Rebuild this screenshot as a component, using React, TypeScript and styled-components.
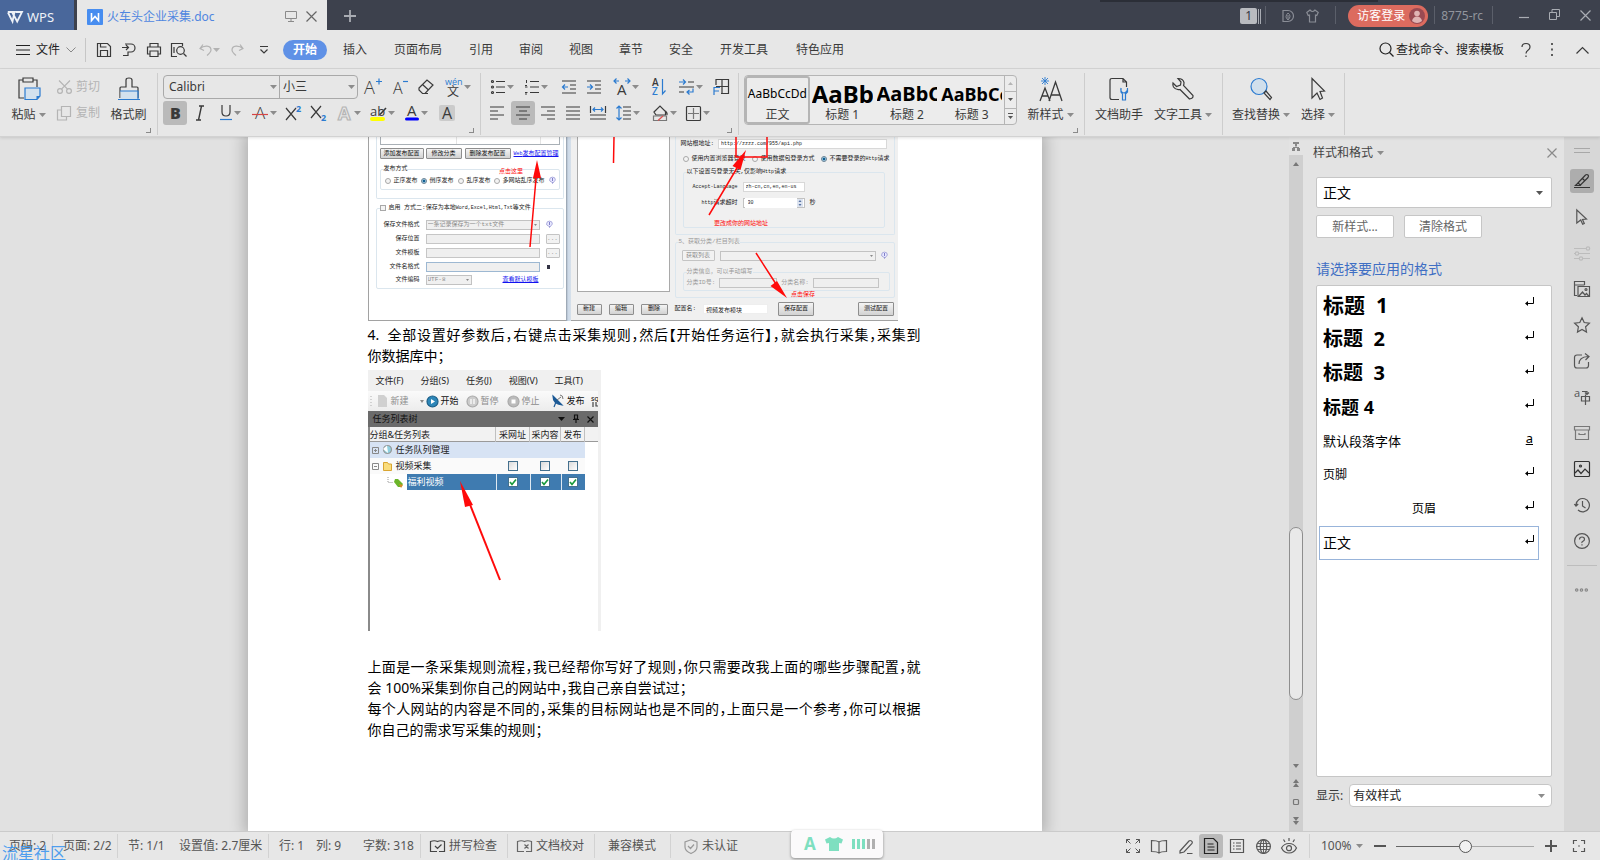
import React from "react";
import styled, { createGlobalStyle, css } from "styled-components";

const UI = `"Noto Sans", "Noto Sans CJK SC", sans-serif`;
const SONG = `"Noto Sans", "Noto Sans CJK SC", sans-serif`;
const PIX = `"Liberation Mono", "Noto Sans CJK SC", monospace`;
const INK = "#3a3a3a";
const BLUE = "#2b7bd0";
const GREY = "#b4b4b4";
const RED = "#ff0a0a";

const Global = createGlobalStyle`
  *, *::before, *::after { box-sizing: border-box; }
  body { margin: 0; font-family: ${UI}; font-size: 12px; line-height: 16px; color: ${INK}; }
  button, input, select { font: inherit; color: inherit; margin: 0; padding: 0; border: 0; background: none; border-radius: 0; }
  button { cursor: default; }
  select { appearance: none; }
  fieldset { min-width: 0; margin: 0; padding: 0; border: 0; }
  legend { padding: 0; }
  p { margin: 0; }
`;

/* ---------- drawing helpers ---------- */

const Drawing = styled.svg`
  display: block;
  flex: none;
  fill: none;
  stroke: currentColor;
  stroke-width: 1.2;
  overflow: visible;
  text {
    stroke: none;
    fill: currentColor;
    font-family: "Open Sans", "Noto Sans CJK SC", sans-serif;
  }
`;

type DrawProps = { w?: number; h?: number; c?: string; children: React.ReactNode };
const Draw = ({ w = 18, h = 18, c, children }: DrawProps) => (
  <Drawing width={w} height={h} viewBox={`0 0 ${w} ${h}`} color={c} aria-hidden="true">
    {children}
  </Drawing>
);
const Caret = ({ c = "#8c8c8c" }: { c?: string }) => (
  <Draw w={7} h={4} c={c}>
    <path d="M0 0h7l-3.500 4z" fill="currentColor" stroke="none" />
  </Draw>
);
const Cross = ({ c, s = 11 }: { c?: string; s?: number }) => (
  <Draw w={s} h={s} c={c}>
    <path d={`M.5.5 ${s - 0.5} ${s - 0.5}M${s - 0.5}.5.5 ${s - 0.5}`} />
  </Draw>
);

/* ---------- frame ---------- */

const Shell = styled.div`
  display: flex;
  flex-direction: column;
  height: 100vh;
  overflow: hidden;
  background: #e7e7e7;
`;

const TitleBar = styled.header`
  display: flex;
  align-items: stretch;
  height: 30px;
  flex: none;
  background: linear-gradient(#2b2e37, #2b2e37) right 222px top / 278px 2px no-repeat #3d414d;
  color: #a9acb3;
`;
const WpsButton = styled.button`
  display: flex;
  align-items: center;
  gap: 4px;
  width: 74px;
  margin-right: 3px;
  padding-left: 7px;
  padding-top: 3px;
  background: #49679b;
  color: #eef2f8;
  font-size: 13px;
`;
const FileTab = styled.div`
  display: flex;
  align-items: center;
  width: 250px;
  padding: 3px 10px 0;
  background: #e7e7e7;
  color: #8a8a8a;
`;
const FileName = styled.span`
  flex: 1;
  padding-left: 4px;
  color: #4f86e0;
`;
const TabIcons = styled.span`
  display: flex;
  align-items: center;
  gap: 9px;
`;
const PlainButton = styled.button<{ $w?: number }>`
  display: flex;
  align-items: center;
  justify-content: center;
  width: ${(p) => p.$w ?? 24}px;
  flex: none;
`;
const Grow = styled.div<{ $n?: number }>`
  flex: ${(p) => p.$n ?? 1};
`;
const BarRule = styled.i<{ $l: number; $r: number }>`
  width: 1px;
  margin: 6px ${(p) => p.$r}px 6px ${(p) => p.$l}px;
  background: #5b5f6a;
`;
const GuestButton = styled.button`
  display: flex;
  align-items: center;
  gap: 4px;
  height: 22px;
  align-self: center;
  width: 80px;
  padding-left: 9px;
  border-radius: 11px;
  background: #dc6b5f;
  color: #fff;
  margin-top: 2px;
`;
const Version = styled.span`
  align-self: center;
  color: #92959d;
  padding-top: 2px;
`;
const WindowCount = styled.span`
  align-self: center;
  width: 17px;
  height: 16px;
  background: #b9bbc0;
  color: #33363f;
  text-align: center;
  border-radius: 2px;
  margin-top: 2px;
`;

const MenuBar = styled.nav`
  display: flex;
  align-items: center;
  height: 39px;
  flex: none;
  padding-top: 1px;
  border-bottom: 1px solid #d6d6d6;
`;
const FileMenu = styled.button`
  display: flex;
  align-items: center;
  gap: 6px;
  width: 86px;
  height: 24px;
  padding-left: 16px;
  border-right: 1px solid #c6c6c6;
  color: #222;
`;
const QuickBar = styled.div`
  display: flex;
  align-items: center;
  width: 197px;
  padding-left: 5px;
`;
const MenuTab = styled.button<{ $long?: boolean }>`
  width: ${(p) => (p.$long ? 76 : 50)}px;
  height: 24px;
`;
const ActiveTab = styled.button`
  width: 44px;
  height: 20px;
  margin-right: 3px;
  border-radius: 10px;
  background: #5f91e6;
  color: #fff;
  font-weight: 700;
`;
const SearchBox = styled.button`
  display: flex;
  align-items: center;
  gap: 2px;
  color: #222;
  margin-right: 8px;
`;

/* ---------- ribbon ---------- */

const Ribbon = styled.div`
  display: flex;
  height: 68px;
  flex: none;
  padding: 4px 0 0;
  border-bottom: 1px solid #d2d2d2;
  position: relative;
  z-index: 2;
  box-shadow: 0 1px 3px rgba(0, 0, 0, 0.12);
  background: #e7e7e7;
`;
const Group = styled.section<{ $w: number; $corner?: boolean }>`
  position: relative;
  display: flex;
  width: ${(p) => p.$w}px;
  height: 62px;
  flex: none;
  border-right: 1px solid #cdcdcd;
  ${(p) =>
    p.$corner &&
    css`
      &::after {
        content: "";
        position: absolute;
        right: 6px;
        bottom: 2px;
        width: 5px;
        height: 5px;
        border: solid #8a8a8a;
        border-width: 0 1px 1px 0;
      }
    `}
`;
const Rows = styled.div<{ $l?: number }>`
  display: flex;
  flex-direction: column;
  gap: 2px;
  padding: 2px 0 0 ${(p) => p.$l ?? 5}px;
`;
const Row = styled.div`
  display: flex;
  align-items: center;
  height: 24px;
`;
const Tool = styled.button<{ $w?: number; $on?: boolean; $ml?: number }>`
  display: flex;
  align-items: center;
  justify-content: center;
  width: ${(p) => p.$w ?? 25}px;
  height: 24px;
  flex: none;
  margin-left: ${(p) => p.$ml ?? 0}px;
  border-radius: 3px;
  background: ${(p) => (p.$on ? "#bababa" : "transparent")};
`;
const SplitTool = styled(Tool)`
  width: 34px;
  gap: 2px;
  padding-left: 2px;
`;
const Split = ({ children, ml }: { children: React.ReactNode; ml?: number }) => (
  <SplitTool $ml={ml}>
    {children}
    <Caret />
  </SplitTool>
);
const BigTool = styled.button<{ $w: number }>`
  display: flex;
  flex-direction: column;
  align-items: center;
  width: ${(p) => p.$w}px;
  flex: none;
  padding-top: 4px;
  gap: 6px;
  white-space: nowrap;
`;
const BigLabel = styled.span`
  display: flex;
  align-items: center;
  gap: 3px;
`;
const SmallTool = styled.button`
  display: flex;
  align-items: center;
  gap: 4px;
  height: 24px;
  color: ${GREY};
  white-space: nowrap;
`;
const FontBox = styled.div`
  display: flex;
  width: 195px;
  height: 24px;
  border: 1px solid #a9a9a9;
  border-radius: 4px;
`;
const FontPick = styled.label<{ $w: number }>`
  display: flex;
  align-items: center;
  width: ${(p) => p.$w}px;
  padding: 0 2px 0 5px;
  & + & {
    border-left: 1px solid #a9a9a9;
    padding-left: 3px;
  }
  select {
    flex: 1;
    min-width: 0;
    font-size: 12px;
  }
`;
const Gallery = styled.div`
  display: flex;
  width: 273px;
  height: 50px;
  margin: 2px 0 0 5px;
  border: 1px solid #b5b5b5;
  border-radius: 4px;
  background: #ececec;
  overflow: hidden;
`;
const StyleCard = styled.button<{ $on?: boolean }>`
  width: 65px;
  padding-top: 3px;
  border: 2px solid ${(p) => (p.$on ? "#b5b5b5" : "transparent")};
  border-radius: 3px;
  overflow: hidden;
`;
const Sample = styled.span<{ $size: number; $bold?: boolean }>`
  display: block;
  height: 26px;
  line-height: 26px;
  font-size: ${(p) => p.$size}px;
  font-weight: ${(p) => (p.$bold ? 700 : 400)};
  color: #000;
  white-space: nowrap;
  overflow: hidden;
`;
const GalleryNav = styled.div`
  display: flex;
  flex-direction: column;
  width: 12px;
  margin-left: auto;
  border-left: 1px solid #b5b5b5;
  button {
    flex: 1;
    display: flex;
    align-items: center;
    justify-content: center;
  }
  button + button {
    border-top: 1px solid #b5b5b5;
  }
`;

/* ---------- work area ---------- */

const Work = styled.main`
  display: flex;
  flex: 1;
  min-height: 0;
`;
const Desk = styled.div`
  flex: 1;
  min-width: 0;
  display: flex;
  justify-content: center;
  background: #e1e1e1;
  overflow: hidden;
`;
const Page = styled.article`
  width: 794px;
  flex: none;
  padding: 0 120px;
  background: #fff;
  box-shadow: 0 0 14px 4px rgba(0, 0, 0, 0.22);
`;
const Line = styled.span<{ $full?: boolean }>`
  display: block;
  width: 553px;
  font-family: ${SONG};
  font-size: 14px;
  line-height: 21px;
  color: #000;
  white-space: nowrap;
  font-feature-settings: "halt";
  text-align: justify;
  text-align-last: ${(p) => (p.$full ? "justify" : "left")};
`;
const Numbered = styled.span`
  display: grid;
  grid-template-columns: 20px 533px;
  font-size: 14px;
  line-height: 21px;
  color: #000;
  ${Line} {
    width: 533px;
  }
`;
const Body = styled.p`
  padding-top: 25px;
`;

/* --- first figure: publishing set-up window --- */

const Figure = styled.figure`
  position: relative;
  display: flex;
  width: 530px;
  height: 185px;
  margin: 0 0 2px;
  font-family: ${PIX};
  font-size: 6px;
  line-height: 8px;
  color: #222;
  white-space: nowrap;
`;
const LeftWindow = styled.div`
  width: 198px;
  flex: none;
  height: 184px;
  padding-left: 7px;
  background: #fff;
  border: solid #a2a2a2;
  border-width: 0 0 1px 1px;
`;
const WindowEdge = styled.div`
  width: 5px;
  flex: none;
  height: 184px;
  background: linear-gradient(90deg, #8f9aa6, #ccd9e8 40%, #d6e0ea);
`;
const RightWindow = styled.div`
  flex: 1;
  min-width: 0;
  height: 184px;
  background: #f0f0f0;
  border-bottom: 1px solid #a2a2a2;
`;
const Ascii = styled.span`
  font-size: 5px;
`;
const Panel = styled.div<{ $h: number }>`
  width: 188px;
  height: ${(p) => p.$h}px;
  padding: 0 3px;
  border: 1px solid #dbe6ee;
  border-top: 0;
  border-radius: 0 0 2px 2px;
`;
const Frame = styled.fieldset<{ $h: number; $ml?: number; $mt?: number; $mr?: number; $dim?: boolean }>`
  height: ${(p) => p.$h}px;
  margin: ${(p) => p.$mt ?? 0}px ${(p) => p.$mr ?? 0}px 0 ${(p) => p.$ml ?? 0}px;
  border: 1px solid #dbe6ee;
  border-radius: 2px;
  color: ${(p) => (p.$dim ? "#9a9a9a" : "inherit")};
  legend {
    display: flex;
    align-items: center;
    gap: 3px;
    height: 8px;
    margin-left: 3px;
  }
`;
const GridTail = styled.div`
  display: grid;
  grid-template-columns: 75px 84px 1fr;
  height: 8px;
  margin-bottom: 3px;
  border: 1px solid #a9b0b6;
  border-top: 0;
  i + i {
    border-left: 1px solid #e4e4e4;
  }
`;
const MiniRow = styled.div<{ $h: number; $g?: number; $pl?: number; $mt?: number }>`
  display: flex;
  align-items: center;
  height: ${(p) => p.$h}px;
  gap: ${(p) => p.$g ?? 2}px;
  padding-left: ${(p) => p.$pl ?? 0}px;
  margin-top: ${(p) => p.$mt ?? 0}px;
`;
const MiniButton = styled.button<{ $w: number; $h?: number; $flat?: boolean; $ml?: number }>`
  width: ${(p) => p.$w}px;
  height: ${(p) => p.$h ?? 11}px;
  flex: none;
  margin-left: ${(p) => p.$ml ?? 0}px;
  border: 1px solid ${(p) => (p.$flat ? "#c4c4c4" : "#8e8e8e")};
  border-radius: 1px;
  background: ${(p) => (p.$flat ? "#f2f2f2" : "linear-gradient(#f4f4f4, #d2d2d2)")};
  line-height: 8px;
  color: ${(p) => (p.$flat ? "#8e8e8e" : "#111")};
`;
const MiniLink = styled.a<{ $ml?: number }>`
  margin-left: ${(p) => p.$ml ?? 0}px;
  color: #1212f0;
  text-decoration: underline;
`;
const MiniLabel = styled.label<{ $w: number }>`
  width: ${(p) => p.$w}px;
  flex: none;
  text-align: right;
`;
const MiniInput = styled.input<{ $w: number; $off?: boolean; $edge?: string; $ascii?: boolean }>`
  width: ${(p) => p.$w}px;
  height: 10px;
  flex: none;
  padding: 0 2px;
  border: 1px solid ${(p) => p.$edge ?? "#d8d8d8"};
  background: ${(p) => (p.$off ? "#efefef" : "#fff")};
  font-size: ${(p) => (p.$ascii ? 5 : 6)}px;
`;
const MiniSelect = styled.span<{ $w: number; $bright?: boolean }>`
  display: flex;
  align-items: center;
  width: ${(p) => p.$w}px;
  height: 10px;
  flex: none;
  padding: 0 2px 0 1px;
  border: 1px solid #c2c2c2;
  background: ${(p) => (p.$bright ? "#fff" : "#f0f0f0")};
  color: ${(p) => (p.$bright ? "#222" : "#8a8a8a")};
  select {
    flex: 1;
    min-width: 0;
    line-height: 8px;
  }
`;
const Choice = styled.label<{ $w?: number }>`
  display: flex;
  align-items: center;
  gap: 3px;
  flex: none;
  width: ${(p) => (p.$w ? p.$w + "px" : "auto")};
  input {
    appearance: none;
    width: 6px;
    height: 6px;
    flex: none;
    border: 1px solid #a8a8a8;
    border-radius: 50%;
    background: #f4f4f4;
  }
  input[type="checkbox"] {
    border-radius: 0;
  }
  input[type="radio"]:checked {
    border-color: #667f92;
    background: radial-gradient(#0f5f92 45%, #bfe2f5 60%);
  }
`;
const SetupArea = styled.div`
  display: flex;
  height: 161px;
  padding: 0 3px 0 6px;
`;
const BlankList = styled.div`
  width: 93px;
  height: 155px;
  margin-right: 5px;
  flex: none;
  background: #fff;
  border: 1px solid #a9a9a9;
  border-top: 0;
`;
const SetupForm = styled.div`
  flex: 1;
  min-width: 0;
`;
const SitePanel = styled(Panel)`
  width: auto;
`;
const Notes = styled.svg`
  position: absolute;
  inset: 0;
  fill: none;
  stroke: ${RED};
  stroke-width: 1.5;
  pointer-events: none;
  text {
    stroke: none;
    fill: ${RED};
    font-size: 6px;
    font-family: ${PIX};
  }
`;
const Bulb = () => (
  <Draw w={7} h={8} c="#8080c8">
    <path d="M.6 3a2.900 2.900 0 0 1 5.800 0L4 6 .8 4z" fill="#e8e8ff" strokeWidth=".6" />
    <path d="M3.500 1v3M3.500 5.500v1" strokeWidth="1" />
  </Draw>
);

/* --- second figure: task tree window --- */

const TaskWindow = styled.figure`
  position: relative;
  width: 233px;
  height: 261px;
  margin: 4px 0 0;
  background: #fff;
  font-size: 9px;
  line-height: 12px;
  color: #222;
  border-right: 3px solid #f0f0f0;
`;
const TaskMenu = styled.div`
  display: flex;
  align-items: center;
  height: 21px;
  padding-left: 8px;
  gap: 17px;
  background: #f0f0f0;
  white-space: nowrap;
`;
const TaskTools = styled.div`
  display: flex;
  align-items: center;
  height: 20px;
  background: linear-gradient(#fafafa, #ececec);
  white-space: nowrap;
  overflow: hidden;
`;
const TaskTool = styled.button<{ $w: number; $off?: boolean }>`
  display: flex;
  align-items: center;
  gap: 2px;
  width: ${(p) => p.$w}px;
  flex: none;
  color: ${(p) => (p.$off ? "#8c8c8c" : "#111")};
`;
const TaskCaption = styled.div`
  display: flex;
  align-items: center;
  gap: 8px;
  height: 16px;
  padding: 0 4px 0 5px;
  background: #6b6b6b;
  color: #111;
`;
const TreeWrap = styled.div`
  height: 204px;
  border-left: 2px solid #8a8a8a;
  background: linear-gradient(#f2f2f2 14px, #9a9a9a 14px, #9a9a9a 15px, #fff 15px);
`;
const Tree = styled.table`
  width: 215px;
  table-layout: fixed;
  border-collapse: collapse;
  th {
    height: 15px;
  }
  td {
    height: 16px;
  }
  td,
  th {
    padding: 0;
    font-weight: 400;
    text-align: center;
    white-space: nowrap;
  }
  th {
    box-shadow: inset -1px 0 #c0c0c0;
  }
  th:first-child,
  td:first-child {
    text-align: left;
  }
  input {
    appearance: none;
    display: block;
    width: 10px;
    height: 10px;
    margin: 0 auto;
    border: 1px solid #44708e;
    background: linear-gradient(135deg, #dadada, #fff);
  }
  input:checked {
    background: #fff
      url("data:image/svg+xml,%3Csvg xmlns='http://www.w3.org/2000/svg' viewBox='0 0 8 8'%3E%3Cpath d='M1 4l2 2.500 4-5' fill='none' stroke='%23199a3c' stroke-width='1.700'/%3E%3C/svg%3E");
  }
`;
const TreeRow = styled.tr<{ $bg?: string }>`
  background: ${(p) => p.$bg ?? "transparent"};
`;
const Node = styled.div<{ $pl: number }>`
  display: flex;
  align-items: center;
  height: 16px;
  gap: 4px;
  padding-left: ${(p) => p.$pl}px;
`;
const Chosen = styled.span`
  flex: 1;
  height: 16px;
  padding: 2px 1px;
  background: #3f7bb0;
  color: #fff;
`;
const ChosenCell = styled.td`
  background: #3f7bb0;
  box-shadow: inset 1px 0 #dfe9f2;
`;

/* ---------- scroll bar ---------- */

const Scroller = styled.div`
  display: flex;
  flex-direction: column;
  align-items: center;
  width: 14px;
  flex: none;
  background: #cfcfcf;
  color: #777;
`;
const ScrollCell = styled.button<{ $h: number; $light?: boolean }>`
  display: flex;
  align-items: center;
  justify-content: center;
  width: 14px;
  height: ${(p) => p.$h}px;
  flex: none;
  background: ${(p) => (p.$light ? "#e3e3e3" : "transparent")};
`;
const Thumb = styled.div`
  flex: 172;
  width: 14px;
  border: 1px solid #8e8e8e;
  border-radius: 7px;
  background: #e9e9e9;
`;

/* ---------- style pane ---------- */

const Pane = styled.aside`
  display: flex;
  flex-direction: column;
  width: 261px;
  flex: none;
  padding: 0 12px 24px 13px;
  background: #e3e3e3;
`;
const PaneHead = styled.div`
  display: flex;
  align-items: center;
  justify-content: space-between;
  height: 32px;
  margin: 0 -6px 8px -3px;
  color: #8a8a8a;
`;
const PaneTitle = styled.h2`
  display: flex;
  align-items: center;
  gap: 4px;
  margin: 0;
  font-size: 12px;
  font-weight: 400;
  color: #444;
`;
const PaneSelect = styled.label<{ $h: number }>`
  display: flex;
  align-items: center;
  flex: 1;
  height: ${(p) => p.$h}px;
  padding: 0 6px 0 3px;
  border: 1px solid #c6c6c6;
  border-radius: ${(p) => (p.$h > 24 ? 2 : 4)}px;
  background: #fff;
  color: #222;
  select {
    flex: 1;
    min-width: 0;
  }
`;
const CurrentStyle = styled(PaneSelect)`
  flex: none;
  padding: 0 8px 0 6px;
  font-size: 14px;
  color: #000;
`;
const PaneButtons = styled.div`
  display: flex;
  gap: 10px;
  margin: 7px 0 23px;
  button {
    width: 78px;
    height: 23px;
    border: 1px solid #c6c6c6;
    border-radius: 2px;
    background: #fff;
    color: #666;
  }
`;
const PaneHint = styled.h3`
  margin: 0 0 8px;
  font-size: 14px;
  line-height: 16px;
  font-weight: 400;
  color: #3f6fc4;
`;
const StyleList = styled.ul`
  flex: 1;
  min-height: 0;
  margin: 0 0 7px;
  padding: 2px 12px 0 2px;
  border: 1px solid #c6c6c6;
  border-radius: 2px;
  background: #fff;
  color: #000;
  list-style: none;
`;
const StyleItem = styled.li<{ $size: number; $bold?: boolean; $on?: boolean; $center?: boolean }>`
  display: flex;
  align-items: center;
  height: 34px;
  padding: 0 4px 0 3px;
  border: 1px solid ${(p) => (p.$on ? "#98b4da" : "transparent")};
  font-size: ${(p) => p.$size}px;
  font-weight: ${(p) => (p.$bold ? 700 : 400)};
  line-height: 24px;
  white-space: pre;
  span {
    flex: 1;
    text-align: ${(p) => (p.$center ? "center" : "left")};
  }
  svg {
    margin-bottom: 6px;
  }
`;
const CharMark = styled.u`
  font-size: 13px;
  margin-bottom: 6px;
  padding-right: 1px;
`;
const ShowRow = styled.div`
  display: flex;
  align-items: center;
  gap: 6px;
`;

const SideBar = styled.div`
  display: flex;
  flex-direction: column;
  align-items: center;
  gap: 12px;
  width: 36px;
  flex: none;
  padding: 11px 1px 0 0;
  background: #d7d7d7;
  color: #555;
`;
const SideTool = styled.button<{ $on?: boolean }>`
  display: flex;
  align-items: center;
  justify-content: center;
  width: 24px;
  height: 24px;
  flex: none;
  border-radius: 3px;
  background: ${(p) => (p.$on ? "#adadad" : "transparent")};
`;
const SideHandle = styled.i`
  width: 16px;
  height: 5px;
  margin-bottom: 4px;
  border: solid #a8a8a8;
  border-width: 1px 0;
`;
const SideRule = styled.i`
  width: 30px;
  height: 1px;
  background: #bdbdbd;
`;

/* ---------- status bar ---------- */

const Status = styled.footer`
  position: relative;
  display: flex;
  align-items: center;
  height: 29px;
  flex: none;
  border-top: 1px solid #cbcbcb;
  color: #555;
  white-space: nowrap;
  z-index: 3;
`;
const Field = styled.span<{ $w: number; $rule?: boolean; $pl?: number }>`
  display: flex;
  align-items: center;
  gap: 4px;
  width: ${(p) => p.$w}px;
  height: 24px;
  flex: none;
  padding-left: ${(p) => p.$pl ?? 10}px;
  border-right: ${(p) => (p.$rule ? "1px solid #d2d2d2" : "0")};
`;
const ViewTool = styled(Tool)`
  width: 24px;
  margin-right: 2px;
`;
const Zoom = styled.input`
  appearance: none;
  width: 138px;
  height: 14px;
  margin: 0 10px 0 4px;
  background: linear-gradient(90deg, #666 50%, #a8a8a8 50%) center / 100% 1px no-repeat;
  &::-webkit-slider-thumb {
    appearance: none;
    width: 13px;
    height: 13px;
    border: 1px solid #555;
    border-radius: 50%;
    background: #f2f2f2;
  }
`;
const Ime = styled.div`
  position: absolute;
  left: calc(50% - 9px);
  top: -2px;
  display: flex;
  align-items: center;
  justify-content: center;
  gap: 9px;
  width: 92px;
  height: 28px;
  padding-left: 6px;
  border-radius: 4px;
  background: #fbfafb;
  box-shadow: 0 1px 3px rgba(0, 0, 0, 0.4);
  color: #7edfc0;
  font-size: 17px;
  font-weight: 700;
`;
const Watermark = styled.span`
  position: absolute;
  left: 2px;
  bottom: -3px;
  font-size: 16px;
  line-height: 20px;
  color: rgba(50, 145, 240, 0.85);
`;

/* ---------- reusable icon drawings ---------- */

const lines = (xs: number[][]) => xs.map(([x1, x2, y]) => `M${x1} ${y}H${x2}`).join("");

const Return = () => (
  <Draw w={9} h={10} c="#000">
    <path d="M8.500 0v6.500H2" strokeWidth="1" />
    <path d="M0 6.500 3 4v5z" fill="#000" stroke="none" />
  </Draw>
);

const Wps = () => (
  <Draw w={16} h={12}>
    <path d="M.8 1h6.700L5.500 10.500 1 1.500M5 1l5.200 9.500L15 1H8.500" strokeWidth="1.800" />
  </Draw>
);

const menuTabs: [string, boolean][] = [
  ["插入", false],
  ["页面布局", true],
  ["引用", false],
  ["审阅", false],
  ["视图", false],
  ["章节", false],
  ["安全", false],
  ["开发工具", true],
  ["特色应用", true],
];

const styleRows: { name: string; size: number; bold?: boolean; mark?: string; center?: boolean; on?: boolean }[] = [
  { name: "标题  1", size: 21, bold: true },
  { name: "标题  2", size: 20, bold: true },
  { name: "标题  3", size: 20, bold: true },
  { name: "标题 4", size: 18, bold: true },
  { name: "默认段落字体", size: 13, mark: "a" },
  { name: "页脚", size: 12 },
  { name: "页眉", size: 12, center: true },
  { name: "正文", size: 14, on: true },
];

function Title() {
  return (
    <TitleBar>
      <WpsButton>
        <Wps />
        WPS
      </WpsButton>
      <FileTab>
        <Draw w={16} h={16}>
          <rect width="16" height="16" rx="1" fill="#478df0" stroke="none" />
          <path d="M4.500 4v7.500l3.500-4 3.500 4V4" stroke="#fff" strokeWidth="1.600" />
        </Draw>
        <FileName>火车头企业采集.doc</FileName>
        <TabIcons>
          <Draw w={12} h={11}>
            <path d="M.5.5h11v7H.5zM6 7.500v3M3 10.500h6" strokeWidth="1" />
          </Draw>
          <Cross c="#666" />
        </TabIcons>
      </FileTab>
      <PlainButton $w={46} aria-label="新建标签">
        <Draw w={12} h={12}>
          <path d="M6 1v12M0 7h12" strokeWidth="1.800" />
        </Draw>
      </PlainButton>
      <Grow />
      <WindowCount>1</WindowCount>
      <Draw w={4} h={30}>
        <path d="M1.500 9v15M3.500 9v15" strokeWidth="1" />
      </Draw>
      <BarRule $l={4} $r={10} />
      <PlainButton aria-label="文档">
        <Draw w={12} h={12} c="#8a8d96">
          <path d="M1 1.500h5a5.500 5.500 0 0 1 0 11H1z" />
          <path d="M6 4q4 3 0 7-4-3 0-7zM6 6v5" strokeWidth="1" />
        </Draw>
      </PlainButton>
      <PlainButton aria-label="皮肤">
        <Draw w={13} h={12} c="#8a8d96">
          <path d="M4 1 .8 3.500l1.400 3 1.300-.5v7h6v-7l1.300.500 1.400-3L9 1Q6.500 4 4 1z" />
        </Draw>
      </PlainButton>
      <BarRule $l={11} $r={12} />
      <GuestButton>
        访客登录
        <Draw w={16} h={16}>
          <circle cx="8" cy="8" r="8" fill="#9a4a52" stroke="none" />
          <circle cx="8" cy="5.500" r="2.800" fill="#e0b4b4" stroke="none" />
          <path d="M3 13q1-4.500 5-4.500t5 4.500q-5 4-10 0z" fill="#e0b4b4" stroke="none" />
        </Draw>
      </GuestButton>
      <BarRule $l={6} $r={6} />
      <Version>8775-rc</Version>
      <BarRule $l={9} $r={17} />
      <PlainButton $w={28} aria-label="最小化">
        <Draw w={10} h={10}>
          <path d="M0 7.500h10" />
        </Draw>
      </PlainButton>
      <PlainButton $w={32} aria-label="还原">
        <Draw w={11} h={12}>
          <path d="M.5 3.500h7v7h-7zM3 3.500V.5h7.500v7h-3" strokeWidth="1" />
        </Draw>
      </PlainButton>
      <PlainButton $w={30} aria-label="关闭">
        <Cross s={11} />
      </PlainButton>
    </TitleBar>
  );
}

function Menu() {
  return (
    <MenuBar>
      <FileMenu>
        <Draw w={14} h={10}>
          <path d="M0 .5h14M0 5h14M0 9.500h14" strokeWidth="1" />
        </Draw>
        文件
        <Draw w={10} h={6} c="#888">
          <path d="m.5.5 4.500 4.500L9.500.5" strokeWidth="1" />
        </Draw>
      </FileMenu>
      <QuickBar>
        <PlainButton $w={25} aria-label="保存">
          <Draw w={14} h={14}>
            <path d="M.5.5h10l3 3v10H.5zM3.500 13.500v-6h7v6M3.500.5v3.500h6" />
          </Draw>
        </PlainButton>
        <PlainButton $w={25} aria-label="导出">
          <Draw w={14} h={14}>
            <path d="M0 4.500h6M4 2l2.500 2.500L4 7M3 1h6a4 4 0 0 1 0 8H6v3.500H1M6 9v1" />
          </Draw>
        </PlainButton>
        <PlainButton $w={25} aria-label="打印">
          <Draw w={14} h={14}>
            <path d="M3 4V.5h8V4M3 11H.5V4h13v7H11M3 8h8v5.500H3z" />
          </Draw>
        </PlainButton>
        <PlainButton $w={25} aria-label="打印预览">
          <Draw w={16} h={14}>
            <path d="M6 13.500H.5V.5h11V3M3 4v6" />
            <circle cx="9.500" cy="7.500" r="3.800" />
            <path d="m12.500 10.500 3 3" />
          </Draw>
        </PlainButton>
        <SplitTool aria-label="撤销">
          <Draw w={12} h={12} c="#b2b2b2">
            <path d="M4 .5 1 4.500l4 2M1 4.500C5 1 12 1 12 6q0 2-4 5.500" />
          </Draw>
          <Caret c="#b2b2b2" />
        </SplitTool>
        <PlainButton $w={26} aria-label="恢复">
          <Draw w={12} h={12} c="#b2b2b2">
            <path d="m8 .5 3 4-4 2M11 4.500C7 1 0 1 0 6q0 2 4 5.500" />
          </Draw>
        </PlainButton>
        <PlainButton $w={26} aria-label="更多">
          <Draw w={8} h={8}>
            <path d="M0 .5h8M.5 3.500 4 7l3.500-3.500" />
          </Draw>
        </PlainButton>
      </QuickBar>
      <ActiveTab>开始</ActiveTab>
      {menuTabs.map(([name, long]) => (
        <MenuTab key={name} $long={long}>
          {name}
        </MenuTab>
      ))}
      <Grow />
      <SearchBox>
        <Draw w={15} h={15}>
          <circle cx="6.500" cy="6.500" r="5.500" />
          <path d="m10.500 10.500 4 4" />
        </Draw>
        查找命令、搜索模板
      </SearchBox>
      <PlainButton $w={27} aria-label="帮助">
        <Draw w={10} h={14}>
          <path d="M1 4q0-3.500 4-3.500t4 3.500q0 2-2 3.200T5 10.500M5 12.500V14" />
        </Draw>
      </PlainButton>
      <PlainButton $w={26} aria-label="选项">
        <Draw w={3} h={13}>
          <path d="M1 0v2M1 5.500v2M1 11v2" strokeWidth="1.600" />
        </Draw>
      </PlainButton>
      <PlainButton $w={35} aria-label="折叠功能区">
        <Draw w={13} h={8}>
          <path d="M.5 7.500 6.500 1.500l6 6" />
        </Draw>
      </PlainButton>
    </MenuBar>
  );
}

function RibbonBar() {
  return (
    <Ribbon>
      <Group $w={158} $corner>
        <BigTool $w={57}>
          <Draw w={24} h={24}>
            <path d="M6 3H2v18h5M16 3h4v7M6 1h10v4H6z" />
            <path d="M8 11h15v8l-3 3.500H8z" fill="#d3e1ee" stroke={BLUE} />
            <path d="M19.500 22.500V19H23z" fill={BLUE} stroke="none" />
          </Draw>
          <BigLabel>
            粘贴
            <Caret />
          </BigLabel>
        </BigTool>
        <Rows $l={0}>
          <SmallTool>
            <Draw w={15} h={14}>
              <circle cx="3" cy="11" r="2.400" />
              <circle cx="12" cy="11" r="2.400" />
              <path d="M2 .5l8.500 8.700M13 .5 4.500 9.200" />
            </Draw>
            剪切
          </SmallTool>
          <SmallTool>
            <Draw w={15} h={15}>
              <path d="M4.500.5h9v10h-9zM4.500 4h-4v10h9v-3.500" />
            </Draw>
            复制
          </SmallTool>
        </Rows>
        <BigTool $w={57}>
          <Draw w={22} h={24}>
            <path d="M2 21V11q0-1 1-1h5V3q0-2 3-2t3 2v7h5q1 0 1 1v10" />
            <path d="M2.500 14h17v8h-17z" fill="#d3e1ee" stroke="none" />
            <path d="M0 22.500h22M2 14h18v8" stroke={BLUE} />
          </Draw>
          <BigLabel>格式刷</BigLabel>
        </BigTool>
      </Group>

      <Group $w={323} $corner>
        <Rows>
          <Row>
            <FontBox>
              <FontPick $w={115}>
                <select aria-label="字体">
                  <option>Calibri</option>
                </select>
                <Caret />
              </FontPick>
              <FontPick $w={78}>
                <select aria-label="字号">
                  <option>小三</option>
                </select>
                <Caret />
              </FontPick>
            </FontBox>
            <Tool $w={30} aria-label="增大字号">
              <Draw w={16}>
                <text x="-1" y="16" fontSize="18" fontWeight="300">A</text>
                <path d="M11 3.500h6M14 .5v6" stroke={BLUE} />
              </Draw>
            </Tool>
            <Tool $w={25} aria-label="减小字号">
              <Draw w={14}>
                <text x="-1" y="16" fontSize="16" fontWeight="300">A</text>
                <path d="M9 3.500h5" stroke={BLUE} />
              </Draw>
            </Tool>
            <Tool $w={26} aria-label="清除格式">
              <Draw w={16} h={16}>
                <path d="m1 9 8-8 6 5-8 8.500H4.500L1 11zM4.500 5.500l6 5.500M7 14.500h3" />
              </Draw>
            </Tool>
            <SplitTool aria-label="拼音">
              <Draw w={18} h={18}>
                <text x="1" y="7" fontSize="9" style={{ fill: BLUE }}>wén</text>
                <text x="3" y="18" fontSize="12">文</text>
              </Draw>
              <Caret />
            </SplitTool>
          </Row>
          <Row>
            <Tool $w={24} $on aria-label="加粗">
              <Draw w={12} h={16}>
                <text x="1" y="14" fontSize="16" fontWeight="800">B</text>
              </Draw>
            </Tool>
            <Tool $w={25} aria-label="倾斜">
              <Draw w={10} h={16}>
                <path d="M4 1h5M1 15h5M6.500 1 3.500 15" strokeWidth="1.400" />
              </Draw>
            </Tool>
            <Split>
              <Draw w={12} h={16}>
                <path d="M2 0v7q0 4 4 4t4-4V0" />
                <path d="M0 14.500h12" stroke={BLUE} />
              </Draw>
            </Split>
            <Split>
              <Draw w={16} h={16}>
                <text x="3" y="14" fontSize="17" fontWeight="300">A</text>
                <path d="M0 9.500h16" stroke="#d64545" />
              </Draw>
            </Split>
            <Tool aria-label="上标">
              <Draw w={16} h={16}>
                <path d="m1 3 10 12M11 3 1 15" />
                <text x="11" y="7" fontSize="9" fontWeight="700" style={{ fill: BLUE }}>2</text>
              </Draw>
            </Tool>
            <Tool aria-label="下标">
              <Draw w={16} h={16}>
                <path d="m1 1 10 12M11 1 1 13" />
                <text x="11" y="16" fontSize="9" fontWeight="700" style={{ fill: BLUE }}>2</text>
              </Draw>
            </Tool>
            <Split>
              <Draw w={16} h={16}>
                <text x="2" y="15" fontSize="18" style={{ fill: "#e7e7e7", stroke: "#b5b5b5" }} fontWeight="700">A</text>
              </Draw>
            </Split>
            <Split>
              <Draw w={16} h={16}>
                <text x="0" y="11" fontSize="13">ab</text>
                <path d="M10 9.500 16 3" strokeWidth="1.600" />
                <rect x="0" y="12" width="15" height="4" rx="2" fill="#ffff00" stroke="none" />
              </Draw>
            </Split>
            <Split>
              <Draw w={14} h={16}>
                <text x="2" y="11" fontSize="15">A</text>
                <rect y="12.500" width="14" height="3" rx="1.500" fill="#0000ff" stroke="none" />
              </Draw>
            </Split>
            <Tool $w={30} aria-label="字符底纹">
              <Draw w={16} h={16}>
                <rect width="16" height="16" rx="2" fill="#cbcbcb" stroke="none" />
                <text x="3" y="14" fontSize="16">A</text>
              </Draw>
            </Tool>
          </Row>
        </Rows>
      </Group>

      <Group $w={258} $corner>
        <Rows $l={3}>
          <Row>
            <Split>
              <Draw w={14} h={14}>
                <path d={lines([[5, 14, 1.5], [5, 14, 7], [5, 14, 12.5]])} />
                <circle cx="1.500" cy="1.500" r="1" />
                <circle cx="1.500" cy="7" r="1" />
                <circle cx="1.500" cy="12.500" r="1" />
              </Draw>
            </Split>
            <Split>
              <Draw w={14} h={14}>
                <path d={lines([[5, 14, 1.5], [5, 14, 7], [5, 14, 12.5]])} />
                <path d="M1.500 0v3M0 7h2.500M0 12.500h2.500M0 5.500h2M0 14h2" strokeWidth="1" />
              </Draw>
            </Split>
            <Tool $ml={4} aria-label="减少缩进">
              <Draw w={14} h={14}>
                <path d={lines([[0, 14, 1], [8, 14, 5], [8, 14, 9], [0, 14, 13]])} />
                <path d="M6 7H.5M3 4.500.5 7 3 9.500" stroke={BLUE} />
              </Draw>
            </Tool>
            <Tool aria-label="增加缩进">
              <Draw w={14} h={14}>
                <path d={lines([[0, 14, 1], [8, 14, 5], [8, 14, 9], [0, 14, 13]])} />
                <path d="M0 7h5.500M3 4.500 5.500 7 3 9.500" stroke={BLUE} />
              </Draw>
            </Tool>
            <Split ml={2}>
              <Draw w={16} h={18}>
                <text x="3" y="17" fontSize="15">A</text>
                <path d="M0 3h5M2.500.5 0 3l2.500 2.500M16 3h-5M13.500.5 16 3l-2.500 2.500" stroke={BLUE} />
              </Draw>
            </Split>
            <Tool $ml={4} aria-label="排序">
              <Draw w={14} h={18}>
                <text x="0" y="8" fontSize="10" fontWeight="600">A</text>
                <text x="0" y="17" fontSize="10" fontWeight="600" style={{ fill: BLUE }}>Z</text>
                <path d="M10.500 1v15l3-3.500" stroke={BLUE} />
              </Draw>
            </Tool>
            <Split ml={2}>
              <Draw w={15} h={16}>
                <path d="M9 3h6M0 8h15M0 13h5" />
                <path d="M0 3h6M4 .5 6.500 3 4 5.500M14 9.500V13H8.500M10.500 11 8 13l2.500 2.500" stroke={BLUE} />
              </Draw>
            </Split>
            <Tool $ml={1} aria-label="制表位">
              <Draw w={16} h={16}>
                <path d="M3 6V.5h12.500v14H8M9 .5v14M3 7.500h12.500" />
                <path d="M1 16V8.500h6M1 12h5" stroke={BLUE} />
              </Draw>
            </Tool>
          </Row>
          <Row>
            <Tool aria-label="左对齐">
              <Draw w={14} h={14}>
                <path d={lines([[0, 14, 1], [0, 8, 5], [0, 14, 9], [0, 8, 13]])} />
              </Draw>
            </Tool>
            <Tool $on $w={24} $ml={2} aria-label="居中">
              <Draw w={14} h={14}>
                <path d={lines([[0, 14, 1], [3, 11, 5], [0, 14, 9], [3, 11, 13]])} />
              </Draw>
            </Tool>
            <Tool aria-label="右对齐">
              <Draw w={14} h={14}>
                <path d={lines([[0, 14, 1], [6, 14, 5], [0, 14, 9], [6, 14, 13]])} />
              </Draw>
            </Tool>
            <Tool aria-label="两端对齐">
              <Draw w={14} h={14}>
                <path d={lines([[0, 14, 1], [0, 14, 5], [0, 14, 9], [0, 14, 13]])} />
              </Draw>
            </Tool>
            <Tool aria-label="分散对齐">
              <Draw w={16} h={14}>
                <path d={lines([[0, 16, 9], [0, 16, 13]]) + "M.5 0v7M15.500 0v7"} />
                <path d="M3 3.500h10M5 1.500l-2 2 2 2M11 1.500l2 2-2 2" stroke={BLUE} />
              </Draw>
            </Tool>
            <Split>
              <Draw w={15} h={14}>
                <path d={lines([[7, 15, 1], [7, 15, 5], [7, 15, 9], [7, 15, 13]])} />
                <path d="M3 0v14M.5 2.500 3 0l2.500 2.500M.5 11.500 3 14l2.500-2.500" stroke={BLUE} />
              </Draw>
            </Split>
            <Split ml={2}>
              <Draw w={16} h={16}>
                <path d="m2 7 6-6 5.500 5.500V10H4zM13.500 6q2 2 1.500 4" />
                <path d="M1.500 11h13v4.500h-13z" stroke="#777" />
                <path d="M6 15.500 11 11" stroke="#e05050" />
              </Draw>
            </Split>
            <Split>
              <Draw w={15} h={15}>
                <rect x=".5" y=".5" width="14" height="14" rx="1" />
                <path d="M7.500 2v11M2 7.500h11" stroke="#777" />
              </Draw>
            </Split>
          </Row>
        </Rows>
      </Group>

      <Group $w={346} $corner>
        <Gallery>
          <StyleCard $on>
            <Sample $size={12}>AaBbCcDd</Sample>正文
          </StyleCard>
          <StyleCard>
            <Sample $size={24} $bold>AaBbCc</Sample>标题 1
          </StyleCard>
          <StyleCard>
            <Sample $size={20} $bold>AaBbCc</Sample>标题 2
          </StyleCard>
          <StyleCard>
            <Sample $size={18} $bold>AaBbCc</Sample>标题 3
          </StyleCard>
          <GalleryNav>
            <button aria-label="上一行">
              <Draw w={5} h={3} c="#b5b5b5"><path d="M0 3h5L2.500 0z" fill="currentColor" stroke="none" /></Draw>
            </button>
            <button aria-label="下一行">
              <Draw w={5} h={3} c="#555"><path d="M0 0h5L2.500 3z" fill="currentColor" stroke="none" /></Draw>
            </button>
            <button aria-label="全部样式">
              <Draw w={5} h={6} c="#555"><path d="M0 .5h5" strokeWidth="1" /><path d="M0 3h5L2.500 6z" fill="currentColor" stroke="none" /></Draw>
            </button>
          </GalleryNav>
        </Gallery>
        <BigTool $w={67}>
          <Draw w={24} h={24}>
            <path d="m1 24 5-13 5 13M3 19h6M10 24 16.500 5 23 24M12 18h9" strokeWidth="1.300" />
            <path d="M6 0v8M2 4h8M3 1l6 6M9 1 3 7" stroke={BLUE} strokeWidth=".900" />
          </Draw>
          <BigLabel>
            新样式
            <Caret />
          </BigLabel>
        </BigTool>
      </Group>

      <Group $w={138}>
        <BigTool $w={68}>
          <Draw w={20} h={24}>
            <path d="M10 22.500H3q-2 0-2-2v-17q0-2 2-2h11l3.500 3.500v5M14 1.500V5h3.500" />
            <path d="M12 11v4l1.500 2v6h3v-6l2-2v-4M12 11q-1 4 3 5 4-1 3.500-5" stroke={BLUE} />
          </Draw>
          <BigLabel>文档助手</BigLabel>
        </BigTool>
        <BigTool $w={60}>
          <Draw w={22} h={24}>
            <path d="M6 1.500q5 0 6 4 0 2-.5 3L21 18.500q.500 3-3.500 3.500L8 12.500q-4 1-6.500-2.500Q.5 8 1 6l3.500 3.500L8.500 8l.500-3z" />
          </Draw>
          <BigLabel>
            文字工具
            <Caret />
          </BigLabel>
        </BigTool>
      </Group>

      <Group $w={122}>
        <BigTool $w={76}>
          <Draw w={22} h={24}>
            <circle cx="9" cy="9.500" r="8" fill="#d0dfec" stroke={BLUE} />
            <path d="m14 16 2-2 5.500 6.500-1.500 2z" />
          </Draw>
          <BigLabel>
            查找替换
            <Caret />
          </BigLabel>
        </BigTool>
        <BigTool $w={38}>
          <Draw w={14} h={24}>
            <path d="M1 1.500 13.500 14l-4.500.500 2.500 6.500-2.500 1.500L6 16l-5 5z" />
          </Draw>
          <BigLabel>
            选择
            <Caret />
          </BigLabel>
        </BigTool>
      </Group>
    </Ribbon>
  );
}

function SetupFigure() {
  return (
    <Figure>
      <LeftWindow>
        <Panel $h={62}>
          <GridTail>
            <i />
            <i />
            <i />
          </GridTail>
          <MiniRow $h={11}>
            <MiniButton $w={44}>添加发布配置</MiniButton>
            <MiniButton $w={36}>修改分类</MiniButton>
            <MiniButton $w={46} $ml={1}>删除发布配置</MiniButton>
            <MiniLink href="#web" $ml={1}><Ascii>Web</Ascii>发布配置管理</MiniLink>
          </MiniRow>
          <Frame $h={25} $mt={6}>
            <legend>发布方式</legend>
            <MiniRow $h={16} $g={0} $pl={4}>
              <Choice $w={36}><input type="radio" name="order" />正序发布</Choice>
              <Choice $w={37}><input type="radio" name="order" defaultChecked />倒序发布</Choice>
              <Choice $w={36}><input type="radio" name="order" />乱序发布</Choice>
              <Choice $w={55}><input type="radio" name="order" />多网站乱序发布</Choice>
              <Bulb />
            </MiniRow>
          </Frame>
        </Panel>
        <Frame $h={85} $mt={5} $mr={2}>
          <legend>
            <Choice>
              <input type="checkbox" />
              <span>
                启用 方式二:保存为本地<Ascii>Word,Excel,Html,Txt</Ascii>等文件
              </span>
            </Choice>
          </legend>
          <MiniRow $h={14} $g={6} $mt={6}>
            <MiniLabel $w={43} htmlFor="fmt">保存文件格式</MiniLabel>
            <MiniSelect $w={114}>
              <select id="fmt"><option>一条记录保存为一个txt文件</option></select>
              <Draw w={3} h={2}><path d="M0 0h3L1.500 2z" fill="currentColor" stroke="none" /></Draw>
            </MiniSelect>
            <Bulb />
          </MiniRow>
          <MiniRow $h={14} $g={6}>
            <MiniLabel $w={43} htmlFor="dir">保存位置</MiniLabel>
            <MiniInput id="dir" $w={114} $off $edge="#c6c6c6" />
            <MiniButton $w={14} $h={10} $flat>...</MiniButton>
          </MiniRow>
          <MiniRow $h={14} $g={6}>
            <MiniLabel $w={43} htmlFor="tpl">文件模板</MiniLabel>
            <MiniInput id="tpl" $w={114} $off $edge="#c6c6c6" />
            <MiniButton $w={14} $h={10} $flat>...</MiniButton>
          </MiniRow>
          <MiniRow $h={14} $g={6}>
            <MiniLabel $w={43} htmlFor="nm">文件名格式</MiniLabel>
            <MiniInput id="nm" $w={114} $off $edge="#9db8d2" />
            <Draw w={5} h={6}><path d="M1 1h3v4H1z" fill="#334" stroke="none" /></Draw>
          </MiniRow>
          <MiniRow $h={12} $g={6}>
            <MiniLabel $w={43} htmlFor="enc">文件编码</MiniLabel>
            <MiniSelect $w={46}>
              <select id="enc"><option>UTF-8</option></select>
              <Draw w={3} h={2}><path d="M0 0h3L1.500 2z" fill="currentColor" stroke="none" /></Draw>
            </MiniSelect>
            <MiniLink href="#tpl" $ml={25}>查看默认模板</MiniLink>
          </MiniRow>
        </Frame>
      </LeftWindow>
      <WindowEdge />
      <RightWindow>
        <SetupArea>
          <BlankList />
          <SetupForm>
            <SitePanel $h={98}>
              <MiniRow $h={14} $g={4} $pl={2}>
                <label htmlFor="root">网站根地址:</label>
                <MiniInput id="root" $w={169} $ascii defaultValue="http://zzzz.com/955/api.php" />
              </MiniRow>
              <MiniRow $h={15} $g={0} $pl={4}>
                <Choice $w={69}><input type="radio" name="login" />使用内置浏览器登录</Choice>
                <Choice $w={69}><input type="radio" name="login" />使用数据包登录方式</Choice>
                <Choice>
                  <input type="radio" name="login" defaultChecked />
                  <span>不需要登录的<Ascii>Http</Ascii>请求</span>
                </Choice>
              </MiniRow>
              <Frame $h={60} $mt={2} $ml={4} $mr={6}>
                <legend><span>以下设置与登录无关,仅影响<Ascii>Http</Ascii>请求</span></legend>
                <MiniRow $h={16} $g={5} $mt={3}>
                  <MiniLabel $w={54} htmlFor="lang"><Ascii>Accept-Language</Ascii></MiniLabel>
                  <MiniInput id="lang" $w={62} $ascii defaultValue="zh-cn,cn,en,en-us" />
                </MiniRow>
                <MiniRow $h={16} $g={5}>
                  <MiniLabel $w={54} htmlFor="wait"><Ascii>http</Ascii>请求超时</MiniLabel>
                  <MiniSelect $w={62} $bright>
                    <MiniInput id="wait" $w={52} $ascii $edge="transparent" defaultValue="30" />
                    <Draw w={6} h={8} c="#5570a0">
                      <rect width="6" height="8" fill="#dde4f0" stroke="none" />
                      <path d="M1.500 3 3 1l1.500 2zM1.500 5 3 7l1.500-2z" fill="currentColor" stroke="none" />
                    </Draw>
                  </MiniSelect>
                  秒
                </MiniRow>
              </Frame>
            </SitePanel>
            <Frame $h={60} $mt={3} $dim>
              <legend>5、获取分类/栏目列表</legend>
              <MiniRow $h={11} $g={5} $mt={4} $pl={6}>
                <MiniButton $w={33} $flat>获取列表</MiniButton>
                <MiniSelect $w={156}>
                  <select aria-label="获取列表" />
                  <Draw w={3} h={2}><path d="M0 0h3L1.500 2z" fill="currentColor" stroke="none" /></Draw>
                </MiniSelect>
                <Bulb />
              </MiniRow>
              <Frame $h={23} $mt={7} $ml={7} $mr={4} $dim>
                <legend>分类信息，可以手动填写</legend>
                <MiniRow $h={13} $g={4} $pl={3}>
                  <label htmlFor="cid">分类ID号:</label>
                  <MiniInput id="cid" $w={58} $off $edge="#c4c4c4" />
                  <label htmlFor="cname">分类名称:</label>
                  <MiniInput id="cname" $w={66} $off $edge="#c4c4c4" />
                </MiniRow>
              </Frame>
            </Frame>
          </SetupForm>
        </SetupArea>
        <MiniRow $h={22} $g={7} $pl={6}>
          <MiniButton $w={25}>新建</MiniButton>
          <MiniButton $w={25}>编辑</MiniButton>
          <MiniButton $w={27}>删除</MiniButton>
          <label htmlFor="cfg">配置名:</label>
          <MiniInput id="cfg" $w={65} $edge="#eee" defaultValue="视频发布模块" />
          <MiniButton $w={36} $h={14} $ml={3}>保存配置</MiniButton>
          <MiniButton $w={36} $h={14} $ml={37}>测试配置</MiniButton>
        </MiniRow>
      </RightWindow>
      <Notes width="530" height="185" viewBox="0 0 530 185">
        <path d="M162 110 168.500 36M245.500 26 246 0M341 78 372 26M388 116 408 147" />
        <path d="M169 23 165 41h8zM378 13 364.500 29l8 4zM419 161 402.500 149l6.500-5z" fill={RED} stroke="none" />
        <path d="M368 0v20h31V0" />
        <text x="131" y="36">点击这里</text>
        <text x="346" y="88">更改成你的网站地址</text>
        <text x="423" y="159">点击保存</text>
      </Notes>
    </Figure>
  );
}

function TaskFigure() {
  const titles = ["采网址", "采内容", "发布"];
  return (
    <TaskWindow>
      <TaskMenu>
        <span>文件(F)</span>
        <span>分组(S)</span>
        <span>任务(J)</span>
        <span>视图(V)</span>
        <span>工具(T)</span>
      </TaskMenu>
      <TaskTools>
        <TaskTool $w={58} $off>
          <Draw w={21} h={14} c="#bbb">
            <path d="M3 2v11" strokeDasharray="1 2" />
            <path d="M10 1h6l3 3v9h-9z" fill="#d0d0d0" stroke="none" />
          </Draw>
          新建
          <Grow />
          <Draw w={6} h={3} c="#888"><path d="M0 0h4L2 3z" fill="currentColor" stroke="none" /></Draw>
        </TaskTool>
        <TaskTool $w={40}>
          <Draw w={13} h={13}>
            <circle cx="6.500" cy="6.500" r="5.500" fill="#2d86b8" stroke="#1d5f88" />
            <path d="M5 4v5l4-2.500z" fill="#fff" stroke="none" />
          </Draw>
          开始
        </TaskTool>
        <TaskTool $w={41} $off>
          <Draw w={13} h={13} c="#aaa">
            <circle cx="6.500" cy="6.500" r="5.500" fill="#ccc" />
            <path d="M5 4v5M8 4v5" stroke="#fff" />
          </Draw>
          暂停
        </TaskTool>
        <TaskTool $w={44} $off>
          <Draw w={13} h={13} c="#aaa">
            <circle cx="6.500" cy="6.500" r="5.500" fill="#bbb" />
            <rect x="4.500" y="4.500" width="4" height="4" fill="#fff" stroke="none" />
          </Draw>
          停止
        </TaskTool>
        <TaskTool $w={40}>
          <Draw w={14} h={13} c="#1c5a96">
            <path d="M2 1q0 8 9 9zM3 12l2-5" fill="#1c5a96" />
            <path d="M6 5l4-3M9 0q3 0 3 4" stroke="#777" strokeWidth="1" />
          </Draw>
          发布
        </TaskTool>
        <Draw w={9} h={12} c="#444">
          <text x="0" y="6" fontSize="6" fontWeight="700">SQ</text>
          <path d="M2 7v5M5 7v4h3" />
        </Draw>
      </TaskTools>
      <TaskCaption>
        任务列表树
        <Grow />
        <Draw w={7} h={4}><path d="M0 0h7L3.500 4z" fill="currentColor" stroke="none" /></Draw>
        <Draw w={6} h={8}><path d="M1.500 0h3v4h-3zM0 4.500h6M3 4.500V8" /></Draw>
        <Cross s={7} />
      </TaskCaption>
      <TreeWrap>
        <Tree>
          <colgroup>
            <col width="126" />
            <col width="34" />
            <col width="31" />
            <col width="24" />
          </colgroup>
          <thead>
            <tr>
              <th>分组&amp;任务列表</th>
              {titles.map((t) => (
                <th key={t}>{t}</th>
              ))}
            </tr>
          </thead>
          <tbody>
            <TreeRow $bg="#d7e3f4">
              <td colSpan={4}>
                <Node $pl={2}>
                  <Draw w={7} h={7} c="#888"><path d="M.5.5h6v6h-6zM2 3.500h3M3.500 2v3" strokeWidth="1" /></Draw>
                  <Draw w={9} h={10} c="#999"><circle cx="4.500" cy="4.500" r="4" fill="#8fd0e0" /><path d="M0 4 4 .5 5 8z" fill="#fff" stroke="none" /></Draw>
                  任务队列管理
                </Node>
              </td>
            </TreeRow>
            <TreeRow $bg="#fafafa">
              <td>
                <Node $pl={2}>
                  <Draw w={7} h={7} c="#888"><path d="M.5.5h6v6h-6zM2 3.500h3" strokeWidth="1" /></Draw>
                  <Draw w={9} h={9} c="#d9a531"><path d="M.5.5h4l1 1.500h3v6.500h-8z" fill="#f9dc7c" strokeWidth="1" /></Draw>
                  视频采集
                </Node>
              </td>
              {titles.map((t) => (
                <td key={t}><input type="checkbox" aria-label={t} /></td>
              ))}
            </TreeRow>
            <TreeRow>
              <td>
                <Node $pl={18}>
                  <Draw w={15} h={11} c="#999">
                    <path d="M0 0v5.500h5" strokeDasharray="1 1" strokeWidth="1" />
                    <path d="m7 2 3 0 5 5-2 3-3 0-4-5z" fill="#6bb52a" stroke="none" />
                    <path d="m11 7 4 1-2 3z" fill="#d88a2a" stroke="none" />
                  </Draw>
                  <Chosen>福利视频</Chosen>
                </Node>
              </td>
              {titles.map((t) => (
                <ChosenCell key={t}><input type="checkbox" aria-label={t} defaultChecked /></ChosenCell>
              ))}
            </TreeRow>
          </tbody>
        </Tree>
      </TreeWrap>
      <Notes width="232" height="261" viewBox="0 0 232 261">
        <path d="M101 132 132 210" strokeWidth="2" />
        <path d="M92 111 97 137l8-2z" fill={RED} stroke="none" />
      </Notes>
    </TaskWindow>
  );
}

function Document() {
  return (
    <Desk>
      <Page>
        <SetupFigure />
        <p>
          <Numbered>
            <span>4.</span>
            <Line $full>全部设置好参数后，右键点击采集规则，然后【开始任务运行】，就会执行采集，采集到</Line>
          </Numbered>
          <Line>你数据库中；</Line>
        </p>
        <TaskFigure />
        <Body>
          <Line $full>上面是一条采集规则流程，我已经帮你写好了规则，你只需要改我上面的哪些步骤配置，就</Line>
          <Line>会 100%采集到你自己的网站中，我自己亲自尝试过；</Line>
        </Body>
        <p>
          <Line $full>每个人网站的内容是不同的，采集的目标网站也是不同的，上面只是一个参考，你可以根据</Line>
          <Line>你自己的需求写采集的规则；</Line>
        </p>
      </Page>
    </Desk>
  );
}

function ScrollBar() {
  return (
    <Scroller>
      <ScrollCell $h={18} $light aria-label="拆分">
        <Draw w={8} h={9} c="#888"><path d="M1 0h6v2H1zM3 2h2v2.500H3zM0 6h3v3H0zM5 6h3v3H5zM1 5h6v1H1z" fill="currentColor" stroke="none" /></Draw>
      </ScrollCell>
      <ScrollCell $h={18} aria-label="向上滚动">
        <Draw w={6} h={4}><path d="M0 4h6L3 0z" fill="currentColor" stroke="none" /></Draw>
      </ScrollCell>
      <Grow $n={355} />
      <Thumb />
      <Grow $n={58} />
      <ScrollCell $h={16} aria-label="向下滚动">
        <Draw w={6} h={4}><path d="M0 0h6L3 4z" fill="currentColor" stroke="none" /></Draw>
      </ScrollCell>
      <ScrollCell $h={19} aria-label="上一页">
        <Draw w={6} h={8}><path d="M0 4h6L3 0zM0 8h6L3 4z" fill="currentColor" stroke="none" /></Draw>
      </ScrollCell>
      <ScrollCell $h={18} aria-label="选择浏览对象">
        <Draw w={6} h={6}><rect x=".5" y=".5" width="5" height="5" rx="1" /></Draw>
      </ScrollCell>
      <ScrollCell $h={20} aria-label="下一页">
        <Draw w={6} h={8}><path d="M0 0h6L3 4zM0 4h6L3 8z" fill="currentColor" stroke="none" /></Draw>
      </ScrollCell>
    </Scroller>
  );
}

function StylePane() {
  return (
    <Pane>
      <PaneHead>
        <PaneTitle>
          样式和格式
          <Caret />
        </PaneTitle>
        <PlainButton $w={12} aria-label="关闭窗格">
          <Cross s={10} />
        </PlainButton>
      </PaneHead>
      <CurrentStyle $h={31}>
        <select aria-label="当前样式">
          <option>正文</option>
        </select>
        <Caret c="#555" />
      </CurrentStyle>
      <PaneButtons>
        <button>新样式...</button>
        <button>清除格式</button>
      </PaneButtons>
      <PaneHint>请选择要应用的格式</PaneHint>
      <StyleList>
        {styleRows.map((r) => (
          <StyleItem key={r.name} $size={r.size} $bold={r.bold} $center={r.center} $on={r.on}>
            <span>{r.name}</span>
            {r.mark ? <CharMark>{r.mark}</CharMark> : <Return />}
          </StyleItem>
        ))}
      </StyleList>
      <ShowRow>
        <label htmlFor="show">显示:</label>
        <PaneSelect as="span" $h={23}>
          <select id="show">
            <option>有效样式</option>
          </select>
          <Caret />
        </PaneSelect>
      </ShowRow>
    </Pane>
  );
}

function Tools() {
  return (
    <SideBar>
      <SideHandle />
      <SideTool $on aria-label="样式">
        <Draw w={16} h={14} c="#333"><path d="M0 13.500h16M3 10 11.500 1q1.500-1 2.500 0t0 2.500L6 11.500H1.500zM4 9l3 2.500M8.500 4.500 11 7" /></Draw>
      </SideTool>
      <SideTool aria-label="选择">
        <Draw w={11} h={16}><path d="M.8 1 10.500 10l-4 .500 1.800 4-1.600.8-2-4.300-3.900 3z" /></Draw>
      </SideTool>
      <SideTool aria-label="属性">
        <Draw w={16} h={14} c="#bcbcbc">
          <path d="M0 2.500h12M0 7.500h1M5 7.500h11M0 12.500h5M9 12.500h7" />
          <circle cx="14" cy="2.500" r="1.700" /><circle cx="3" cy="7.500" r="1.700" /><circle cx="7" cy="12.500" r="1.700" />
        </Draw>
      </SideTool>
      <SideTool aria-label="素材">
        <Draw w={16} h={16}><path d="M3 14.500H.5V.5h10V4M.5 4h10M4 5.500h11.500v10H4zM5 15l3.500-4 2.500 3 1.500-1.500 2.500 3M4 5.500v10" /><circle cx="12" cy="8.500" r="1" /></Draw>
      </SideTool>
      <SideTool aria-label="收藏">
        <Draw w={16} h={16}><path d="m8 .8 2.200 4.700 5.200.700-3.800 3.600.9 5.200L8 12.500 3.500 15l.9-5.200L.6 6.200l5.200-.7z" /></Draw>
      </SideTool>
      <SideTool aria-label="分享">
        <Draw w={16} h={16}><path d="M8 2H3Q.5 2 .5 4.500v8Q.5 15 3 15h9q2.500 0 2.500-2.500V9M5 11q0-7 9-7.500M11 .5l4 3-3.500 3.500" /></Draw>
      </SideTool>
      <SideTool aria-label="翻译">
        <Draw w={16} h={16}><text x="0" y="8" fontSize="11">a</text><path d="M8 2.500h5V5M11 3.500l2 2 2-2M7.500 7.500h8v4.500h-8zM11.500 5.500V16" /></Draw>
      </SideTool>
      <SideTool aria-label="备份">
        <Draw w={16} h={14} c="#777"><path d="M.5.5h15V4H.5zM1.500 4v9.500h13V4M5 7v1.500h6V7" /></Draw>
      </SideTool>
      <SideTool aria-label="图片">
        <Draw w={16} h={16} c="#333"><rect x=".5" y=".5" width="15" height="15" rx="1" /><circle cx="6.500" cy="5" r="1" /><path d="m1 12 3-3 3 3.500L11 8l4 4" /></Draw>
      </SideTool>
      <SideTool aria-label="历史">
        <Draw w={16} h={16}><path d="M2 8a6.700 6.700 0 1 1 2 5M.3 7 2 9.200 4.200 7M8.500 4v5l3 2" /></Draw>
      </SideTool>
      <SideTool aria-label="帮助">
        <Draw w={16} h={16}><circle cx="8" cy="8" r="7.400" /><path d="M5.500 6.500Q5.500 4 8 4t2.500 2.200Q10.500 7.500 9 8.300T8 10M8 11.300v1.300" /></Draw>
      </SideTool>
      <SideRule />
      <SideTool aria-label="更多">
        <Draw w={13} h={4} c="#888"><circle cx="1.700" cy="2" r="1.200" /><circle cx="6.500" cy="2" r="1.200" /><circle cx="11.300" cy="2" r="1.200" /></Draw>
      </SideTool>
    </SideBar>
  );
}

function StatusBar() {
  return (
    <Status>
      <Field $w={53} $pl={9} $rule>页码: 2</Field>
      <Field $w={65} $rule>页面: 2/2</Field>
      <Field $w={51}>节: 1/1</Field>
      <Field $w={100} $rule>设置值: 2.7厘米</Field>
      <Field $w={37}>行: 1</Field>
      <Field $w={48}>列: 9</Field>
      <Field $w={67} $pl={9} $rule>字数: 318</Field>
      <Field $w={87} $pl={9} $rule>
        <Draw w={15} h={12} c="#444"><path d="M7 11.500H.5V1.500q4-1.500 7 0 3-1.500 7 0v10H9M5 6l2.500 2.500 4-4" /></Draw>
        拼写检查
      </Field>
      <Field $w={87} $pl={9} $rule>
        <Draw w={15} h={12} c="#666"><path d="M7 11.500H.5V1.500q4-1.500 7 0 3-1.500 7 0v10H9M7.500 4.500l4 4M11.500 4.500l-4 4" /></Draw>
        文档校对
      </Field>
      <Field $w={76} $pl={13} $rule>兼容模式</Field>
      <Field $w={70} $pl={13}>
        <Draw w={14} h={15} c="#999"><path d="M7 .8 13 3v5q0 4-6 6.500Q1 12 1 8V3zM4 7l2.500 2.500L10 5.500" /></Draw>
        未认证
      </Field>
      <Grow />
      <ViewTool aria-label="全屏"><Draw w={14} h={14}><path d="M.5 4V.5H4M10 .5h3.500V4M.5 10v3.500H4M10 13.500h3.500V10M.5.5l4 4M13.500.5l-4 4M.5 13.500l4-4M13.500 13.500l-4-4" strokeWidth="1" /></Draw></ViewTool>
      <ViewTool aria-label="阅读版式"><Draw w={16} h={13}><path d="M8 2Q6 .5.500.5v11Q6 11.500 8 13q2-1.500 7.500-1.500V.5Q10 .5 8 2v11" /></Draw></ViewTool>
      <ViewTool aria-label="写作模式"><Draw w={15} h={15}><path d="M2 12 11 2q1-1 2.500 0t.5 2.500L6 13l-4 1zM9 14.500h5.500" /></Draw></ViewTool>
      <ViewTool $on aria-label="页面视图"><Draw w={14} h={16} c="#222"><path d="M.5.5h9l4 4v11H.5zM3.500 6h6M3.500 9h7M3.500 12h7" /></Draw></ViewTool>
      <ViewTool aria-label="大纲视图"><Draw w={14} h={14}><path d="M.5.5h13v13H.5zM3 4h1.500M6 4h5M3 7h1.500M6 7h5M3 10h1.500M6 10h5" /></Draw></ViewTool>
      <ViewTool aria-label="Web 版式"><Draw w={15} h={15}><circle cx="7.500" cy="7.500" r="6.900" /><ellipse cx="7.500" cy="7.500" rx="3.200" ry="6.900" /><path d="M1.500 4.500h12M1.500 10.500h12M7.500.6v14M.5 7.500h14" strokeWidth=".900" /></Draw></ViewTool>
      <ViewTool aria-label="护眼模式"><Draw w={16} h={16}><path d="M.5 10Q3 5.500 8 5.500t7.500 4.500Q13 15 8 15T.5 10zM8 0v3M2.500 1.500l1.500 2.500M13.500 1.500 12 4" /><circle cx="8" cy="10.200" r="2.500" /></Draw></ViewTool>
      <Field $w={7} $pl={0} $rule />
      <Field $w={58} $pl={11}>
        100%
        <Caret />
      </Field>
      <PlainButton $w={24} aria-label="缩小"><Draw w={12} h={12}><path d="M0 6h12" strokeWidth="2" /></Draw></PlainButton>
      <Zoom type="range" aria-label="显示比例" defaultValue={50} />
      <PlainButton $w={14} aria-label="放大"><Draw w={12} h={12}><path d="M0 6h12M6 0v12" strokeWidth="2" /></Draw></PlainButton>
      <PlainButton $w={42} aria-label="最佳显示比例"><Draw w={12} h={12}><path d="M.5 4V.5H4M8 .5h3.500V4M.5 8v3.500H4M8 11.500h3.500V8" /><circle cx="6" cy="6" r=".8" fill="currentColor" stroke="none" /></Draw></PlainButton>
      <Ime>
        <span>A</span>
        <Draw w={18} h={14}><path d="M5 0q4 3 8 0l5 2.500-1.500 4-2.500-.5v8H4V6l-2.500.5L0 2.500z" fill="currentColor" stroke="none" /></Draw>
        <Draw w={24} h={10}>
          <path d="M1.500 0v10M6.500 0v10M11.500 0v10" strokeWidth="3" />
          <path d="M16.500 0v10M21.500 0v10" strokeWidth="3" stroke="#b0b0b0" />
        </Draw>
      </Ime>
      <Watermark>流星社区</Watermark>
    </Status>
  );
}

export default function App() {
  return (
    <>
      <Global />
      <Shell>
        <Title />
        <Menu />
        <RibbonBar />
        <Work>
          <Document />
          <ScrollBar />
          <StylePane />
          <Tools />
        </Work>
        <StatusBar />
      </Shell>
    </>
  );
}
